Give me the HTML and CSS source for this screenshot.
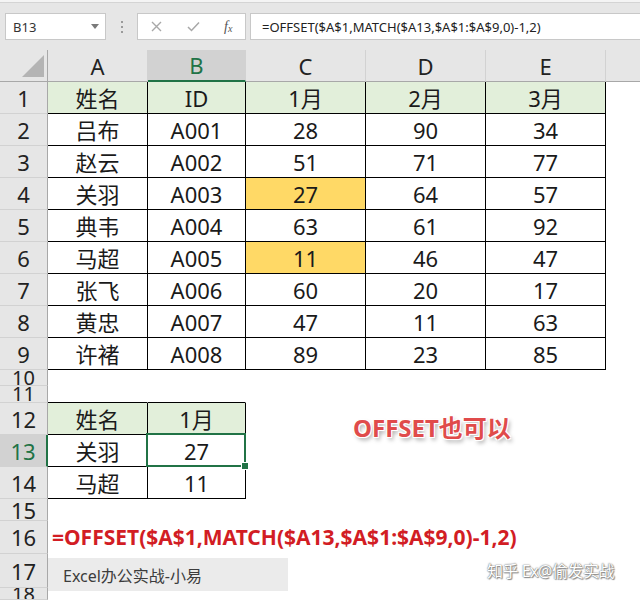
FILE: index.html
```
<!DOCTYPE html>
<html lang="zh-CN">
<head>
<meta charset="utf-8">
<title>OFFSET</title>
<link rel="stylesheet" href="styles.css">
</head>
<body>
<div class="app">
  <div class="toolbar">
    <div class="namebox"><span>B13</span><svg class="dd" width="8" height="5" viewBox="0 0 8 5"><path d="M0 0H8L4 5Z" fill="#7a7a7a"/></svg></div>
    <div class="dots"><i></i><i></i><i></i></div>
    <div class="fxbox">
      <svg width="11" height="11" viewBox="0 0 11 11"><path d="M1 1L10 10M10 1L1 10" stroke="#a8a8a8" stroke-width="1.4" fill="none"/></svg>
      <svg width="13" height="11" viewBox="0 0 13 11"><path d="M1 6L4.5 9.5L12 1.5" stroke="#a8a8a8" stroke-width="1.5" fill="none"/></svg>
      <span class="fx">f<sub>x</sub></span>
    </div>
    <div class="formula">=OFFSET($A$1,MATCH($A13,$A$1:$A$9,0)-1,2)</div>
  </div>
  <div class="sheet">
    <div class="corner"><span class="tri"></span></div>
    <div class="ch">A</div><div class="ch on">B</div><div class="ch">C</div><div class="ch">D</div><div class="ch">E</div><div class="ch last"></div>

    <div class="rh">1</div><div class="c t g">姓名</div><div class="c t g">ID</div><div class="c t g">1月</div><div class="c t g">2月</div><div class="c t g">3月</div><div class="c"></div>
    <div class="rh">2</div><div class="c t">吕布</div><div class="c t">A001</div><div class="c t">28</div><div class="c t">90</div><div class="c t">34</div><div class="c"></div>
    <div class="rh">3</div><div class="c t">赵云</div><div class="c t">A002</div><div class="c t">51</div><div class="c t">71</div><div class="c t">77</div><div class="c"></div>
    <div class="rh">4</div><div class="c t">关羽</div><div class="c t">A003</div><div class="c t y">27</div><div class="c t">64</div><div class="c t">57</div><div class="c"></div>
    <div class="rh">5</div><div class="c t">典韦</div><div class="c t">A004</div><div class="c t">63</div><div class="c t">61</div><div class="c t">92</div><div class="c"></div>
    <div class="rh">6</div><div class="c t">马超</div><div class="c t">A005</div><div class="c t y">11</div><div class="c t">46</div><div class="c t">47</div><div class="c"></div>
    <div class="rh">7</div><div class="c t">张飞</div><div class="c t">A006</div><div class="c t">60</div><div class="c t">20</div><div class="c t">17</div><div class="c"></div>
    <div class="rh">8</div><div class="c t">黄忠</div><div class="c t">A007</div><div class="c t">47</div><div class="c t">11</div><div class="c t">63</div><div class="c"></div>
    <div class="rh">9</div><div class="c t">许褚</div><div class="c t">A008</div><div class="c t">89</div><div class="c t">23</div><div class="c t">85</div><div class="c"></div>
    <div class="rh short">10</div><div class="c"></div><div class="c"></div><div class="c"></div><div class="c"></div><div class="c"></div><div class="c"></div>
    <div class="rh short">11</div><div class="c bt"></div><div class="c bt"></div><div class="c"></div><div class="c"></div><div class="c"></div><div class="c"></div>
    <div class="rh">12</div><div class="c t g">姓名</div><div class="c t g">1月</div><div class="c"></div><div class="c"></div><div class="c"></div><div class="c"></div>
    <div class="rh on">13</div><div class="c t">关羽</div><div class="c t sel">27</div><div class="c"></div><div class="c"></div><div class="c"></div><div class="c"></div>
    <div class="rh">14</div><div class="c t">马超</div><div class="c t">11</div><div class="c"></div><div class="c"></div><div class="c"></div><div class="c"></div>
    <div class="rh">15</div><div class="c"></div><div class="c"></div><div class="c"></div><div class="c"></div><div class="c"></div><div class="c"></div>
    <div class="rh">16</div><div class="c formula-cell">=OFFSET($A$1,MATCH($A13,$A$1:$A$9,0)-1,2)</div>
    <div class="rh">17</div><div class="c"></div><div class="c"></div><div class="c"></div><div class="c"></div><div class="c"></div><div class="c"></div>
    <div class="rh short">18</div><div class="c"></div><div class="c"></div><div class="c"></div><div class="c"></div><div class="c"></div><div class="c"></div>
  </div>
  <div class="callout">OFFSET也可以</div>
  <div class="mark">Excel办公实战-小易</div>
  <div class="zhihu">知乎 Ex@偷发实战</div>
</div>
</body>
</html>
```
FILE: styles.css
```
* { box-sizing: border-box; }
html, body { margin: 0; padding: 0; background: #fff; }
body { font-family: "Noto Sans", "Noto Sans CJK SC", sans-serif; }
.app { position: relative; width: 640px; height: 600px; overflow: hidden; }

.toolbar {
  height: 50px;
  background: #e6e6e6;
  box-shadow: inset 0 2px 0 #f4f4f4, inset 0 3px 0 #d4d4d4;
  display: flex;
  align-items: flex-start;
  padding: 13px 0 0 5px;
}
.namebox {
  width: 101px; height: 27px;
  background: #fff;
  border: 1px solid #c8c8c8;
  display: flex; align-items: center; justify-content: space-between;
  padding: 0 6px 0 7px;
  font-size: 13px; color: #333;
}
.dots {
  width: 31px; height: 27px;
  display: flex; flex-direction: column; align-items: center; justify-content: center; gap: 3px;
}
.dots i { width: 2px; height: 2px; background: #9a9a9a; display: block; }
.fxbox {
  width: 109px; height: 27px;
  background: #fff;
  border: 1px solid #c8c8c8;
  display: flex; align-items: center;
  padding: 0 0 0 13px;
}
.fxbox svg:first-child { margin-right: 25px; }
.fxbox svg:nth-child(2) { margin-right: 24px; }
.fx {
  font-family: "Liberation Serif", serif; font-style: italic; font-size: 14px; color: #555;
  line-height: 1;
}
.fx sub { font-size: 10px; vertical-align: -1px; }
.formula {
  flex: 1; height: 27px; margin-left: 4px;
  background: #fff;
  border: 1px solid #c8c8c8; border-right: none;
  display: flex; align-items: center; padding-left: 11px;
  font-size: 13px; color: #222; white-space: nowrap;
}

.sheet {
  display: grid;
  grid-template-columns: 48px 100px 98px 120px 120px 120px 1fr;
  grid-template-rows: 32px repeat(9, 32px) 16px 17px 32px 32px 32px 22px 33px 34px 1fr;
  height: 550px;
}
.corner, .ch, .rh { background: #e6e6e6; color: #222; font-size: 22px; }
.corner { border-right: 1px solid #a8a8a8; border-bottom: 1px solid #a8a8a8; position: relative; }
.tri {
  position: absolute; right: 3px; bottom: 4px;
  width: 22px; height: 22px; background: #b4b4b4;
  clip-path: polygon(100% 0, 100% 100%, 0 100%);
}
.ch {
  display: flex; align-items: center; justify-content: center;
  border-right: 1px solid #d2d2d2; border-bottom: 1px solid #a8a8a8;
  line-height: 1;
}
.ch.last { border-right: none; }
.ch.on { background: #d2d2d2; color: #217346; border-bottom: 2px solid #217346; }
.rh {
  display: flex; align-items: center; justify-content: center;
  border-right: 1px solid #a8a8a8; border-bottom: 1px solid #d2d2d2;
  overflow: hidden; line-height: 1;
}
.rh.short { font-size: 20px; line-height: 14px; }
.rh.on { background: #d2d2d2; color: #217346; border-right: 2px solid #217346; }

.c {
  display: flex; align-items: center; justify-content: center;
  border-right: 1px solid transparent; border-bottom: 1px solid transparent;
  font-size: 22px; color: #1a1a1a; white-space: nowrap; line-height: 1;
}
.c.t { border-color: #000; }
.c.bt { border-bottom-color: #000; }
.c.g { background: #e2efda; }
.c.y { background: #ffd966; }
.c.sel { position: relative; }
.c.sel::before {
  content: ""; position: absolute; left: -2px; top: -2px; right: -1px; bottom: -1px;
  border: 2px solid #217346; z-index: 2;
}
.c.sel::after {
  content: ""; position: absolute; right: -4px; bottom: -4px;
  width: 6px; height: 6px; background: #217346; border: 1px solid #fff; z-index: 3;
}
.formula-cell {
  grid-column: 2 / -1;
  justify-content: flex-start; padding-left: 4px;
  font-weight: 700; font-size: 21px; color: #d21d24;
}

.callout {
  position: absolute; left: 353px; top: 416px;
  font-weight: 700; font-size: 24px; line-height: 1; color: #e04b4b;
  text-shadow: 1px 1px 0 #fff, -1px -1px 0 #fff, 1px -1px 0 #fff, -1px 1px 0 #fff, 2px 3px 4px rgba(0,0,0,0.35);
}
.mark {
  position: absolute; left: 48px; top: 558px; width: 240px; height: 33px;
  background: #ebebeb; color: #3c3c3c; font-size: 16px;
  display: flex; align-items: center; padding-left: 15px;
}
.zhihu {
  position: absolute; left: 487px; top: 563px;
  font-size: 16px; line-height: 1; color: #fff; letter-spacing: -0.5px;
  text-shadow: 0 0 1px #666, 0 0 2px #999, 1px 1px 1px #888;
}
```
